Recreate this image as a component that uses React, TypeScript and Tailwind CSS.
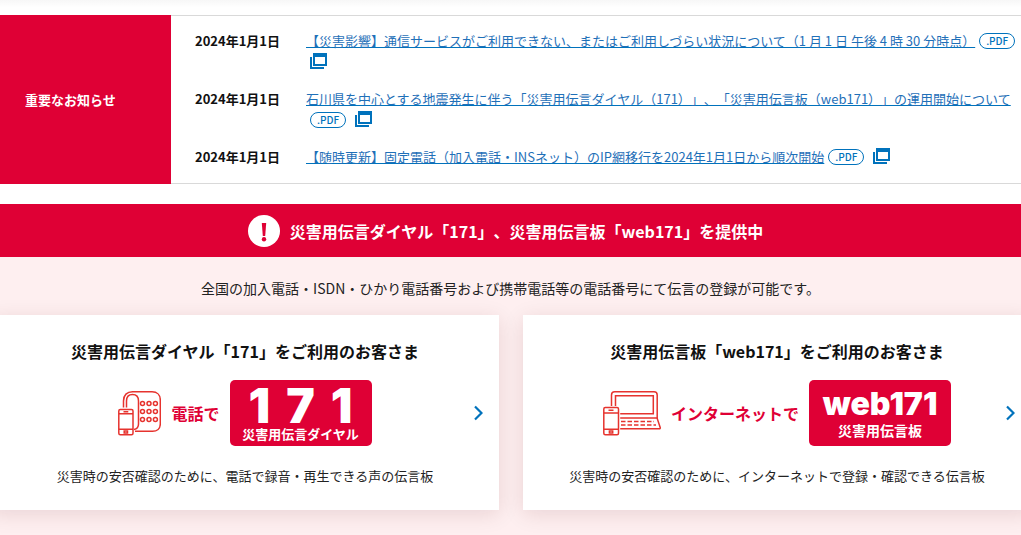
import React from "react";

const notices = [
  {
    date: "2024年1月1日",
    title: "【災害影響】通信サービスがご利用できない、またはご利用しづらい状況について（1 月 1 日 午後 4 時 30 分時点）",
  },
  {
    date: "2024年1月1日",
    title: "石川県を中心とする地震発生に伴う「災害用伝言ダイヤル（171）」、「災害用伝言板（web171）」の運用開始について",
  },
  {
    date: "2024年1月1日",
    title: "【随時更新】固定電話（加入電話・INSネット）のIP網移行を2024年1月1日から順次開始",
  },
];

function WindowIcon() {
  return (
    <svg className="inline-block ml-1 align-[-2px]" width="17" height="16" viewBox="0 0 17 16" fill="#0072bc" aria-label="別ウィンドウで開く">
      <path fillRule="evenodd" d="M3 0h14v13H3zM5 4v7h10V4z" />
      <path d="M0 4h2v10h12v2H0z" />
    </svg>
  );
}

function AlertIcon() {
  return (
    <svg width="32" height="32" viewBox="0 0 32 32">
      <circle cx="16" cy="16" r="16" fill="#fff" />
      <path d="M13.8 8h4.4l-1 13h-2.4z" fill="#df0035" />
      <circle cx="16" cy="24.3" r="2.2" fill="#df0035" />
    </svg>
  );
}

function PhoneIcon() {
  return (
    <svg width="43" height="45" viewBox="0 0 43 45" fill="none" stroke="#e6332e" strokeWidth="1.5">
      <path d="M5.5 16.5V10C5.5 4 9 .8 14.5.8H34c5 0 8.3 3.2 8.3 8.2v24c0 4.5-3.3 7.3-7.8 7.3H17" />
      <path d="M8.5 16.5V10c0-4.3 2.5-6.500 6-6.500 4 0 6 2.500 6 6.500v23c0 3.500-1.500 5-4.500 5.500" />
      <rect x=".8" y="18.5" width="14.2" height="25.2" rx="1.5" />
      <path d="M.8 22.7H15M.8 38.2H15M5.5 20.7h4.8" />
      <rect x="6.2" y="40" width="3.3" height="2" />
      {[12.5, 20.5, 28.5].map((y) => (
        <g key={y}>
          <circle cx="24.5" cy={y} r="2" />
          <circle cx="31" cy={y} r="2" />
          <circle cx="37.4" cy={y} r="2" />
        </g>
      ))}
    </svg>
  );
}

function LaptopIcon() {
  return (
    <svg width="58" height="45" viewBox="0 0 58 45" fill="none" stroke="#e6332e" strokeWidth="1.5">
      <path d="M8.5 15V4c0-2.2 1-3.2 3.2-3.2H51c2.2 0 3.2 1 3.2 3.2v23.5l3 9c.2.8-.2 1.3-1 1.3H17.2" />
      <path d="M12.5 15V4.7h37.8v18H17.2M17.2 27h37" />
      <path d="M18 30.5h33M18 34h35" strokeDasharray="4.5 2" />
      <rect x=".8" y="16.5" width="14.7" height="27.2" rx="1.5" />
      <path d="M.8 22h14.7M.8 38.3h14.7M5.5 19.2h5" />
      <rect x="6.4" y="40" width="3.3" height="2" />
    </svg>
  );
}

function Chevron() {
  return (
    <svg className="absolute right-4 top-1/2 -translate-y-1/2" width="9" height="16" viewBox="0 0 9 16" fill="none" stroke="#0072bc" strokeWidth="2.2">
      <path d="M1 1.5 7.5 8 1 14.5" />
    </svg>
  );
}

type CardProps = {
  title: string;
  label: string;
  text: string;
  icon: React.ReactNode;
  children: React.ReactNode;
};

function Card({ title, label, text, icon, children }: CardProps) {
  return (
    <a href="#" className="relative block bg-white py-6 text-center shadow-[0_4px_20px_rgba(80,0,20,0.12)]">
      <h3 className="text-base leading-6 font-bold">{title}</h3>
      <div className="mt-[17px] flex items-center justify-center gap-2.5">
        {icon}
        <span className="text-base leading-6 font-bold text-[#df0035]">{label}</span>
        <div className="flex h-[66px] w-[142px] flex-col items-center rounded-[5px] bg-[#df0035] pt-2 font-bold text-white">
          {children}
        </div>
      </div>
      <p className="mt-5 text-[13px] leading-5 text-[#222]">{text}</p>
      <Chevron />
    </a>
  );
}

export default function App() {
  return (
    <div className="overflow-hidden bg-white font-['Noto_Sans_CJK_JP',sans-serif] text-[#111] [text-spacing-trim:space-all]">
      <div className="h-[15px] bg-linear-to-b from-[#f7f7f7] to-white to-50%" />

      <section className="flex">
        <h2 className="flex w-[171px] shrink-0 items-center bg-[#df0035] pl-[25px] text-[13px] font-bold text-white">
          重要なお知らせ
        </h2>
        <ul className="flex grow flex-col gap-4 border-y border-[#d9d9d9] pt-[14px] pb-4 pl-6 text-[13px] leading-[21px]">
          {notices.map((n) => (
            <li key={n.title} className="flex">
              <time className="w-[111px] shrink-0 font-bold">{n.date}</time>
              <div>
                <a href="#" className="text-[#1f70b8] underline decoration-[#0072bc] underline-offset-1">{n.title}</a>
                <span className="mr-[5px] ml-1 inline-flex h-4 w-9 items-center justify-center rounded-full border border-[#0072bc] align-[1px] text-[10px] leading-none font-medium text-[#0072bc]">
                  .PDF
                </span>
                <WindowIcon />
              </div>
            </li>
          ))}
        </ul>
      </section>

      <section className="mt-5 bg-[#feeff0]">
        <h2 className="flex h-[53px] items-center justify-center gap-2.5 bg-[#df0035] pr-2.5 text-base font-bold text-white">
          <AlertIcon />
          災害用伝言ダイヤル「171」、災害用伝言板「web171」を提供中
        </h2>
        <p className="pt-[21px] text-center text-sm leading-5 text-[#222]">
          全国の加入電話・ISDN・ひかり電話番号および携帯電話等の電話番号にて伝言の登録が可能です。
        </p>
        <div className="-mr-2.5 -ml-[9px] grid grid-cols-2 gap-6 pt-[17px] pb-[25px]">
          <Card
            title="災害用伝言ダイヤル「171」をご利用のお客さま"
            label="電話で"
            text="災害時の安否確認のために、電話で録音・再生できる声の伝言板"
            icon={<PhoneIcon />}
          >
            <span className="flex gap-4 font-['Inter',sans-serif] text-5xl leading-9 font-black">
              <span>1</span>
              <span>7</span>
              <span>1</span>
            </span>
            <span className="mt-0.5 text-[13px] leading-4">災害用伝言ダイヤル</span>
          </Card>
          <Card
            title="災害用伝言板「web171」をご利用のお客さま"
            label="インターネットで"
            text="災害時の安否確認のために、インターネットで登録・確認できる伝言板"
            icon={<LaptopIcon />}
          >
            <span className="font-['Inter',sans-serif] text-[32px] leading-8 font-black">web171</span>
            <span className="mt-0.5 text-sm leading-4">災害用伝言板</span>
          </Card>
        </div>
      </section>
    </div>
  );
}
